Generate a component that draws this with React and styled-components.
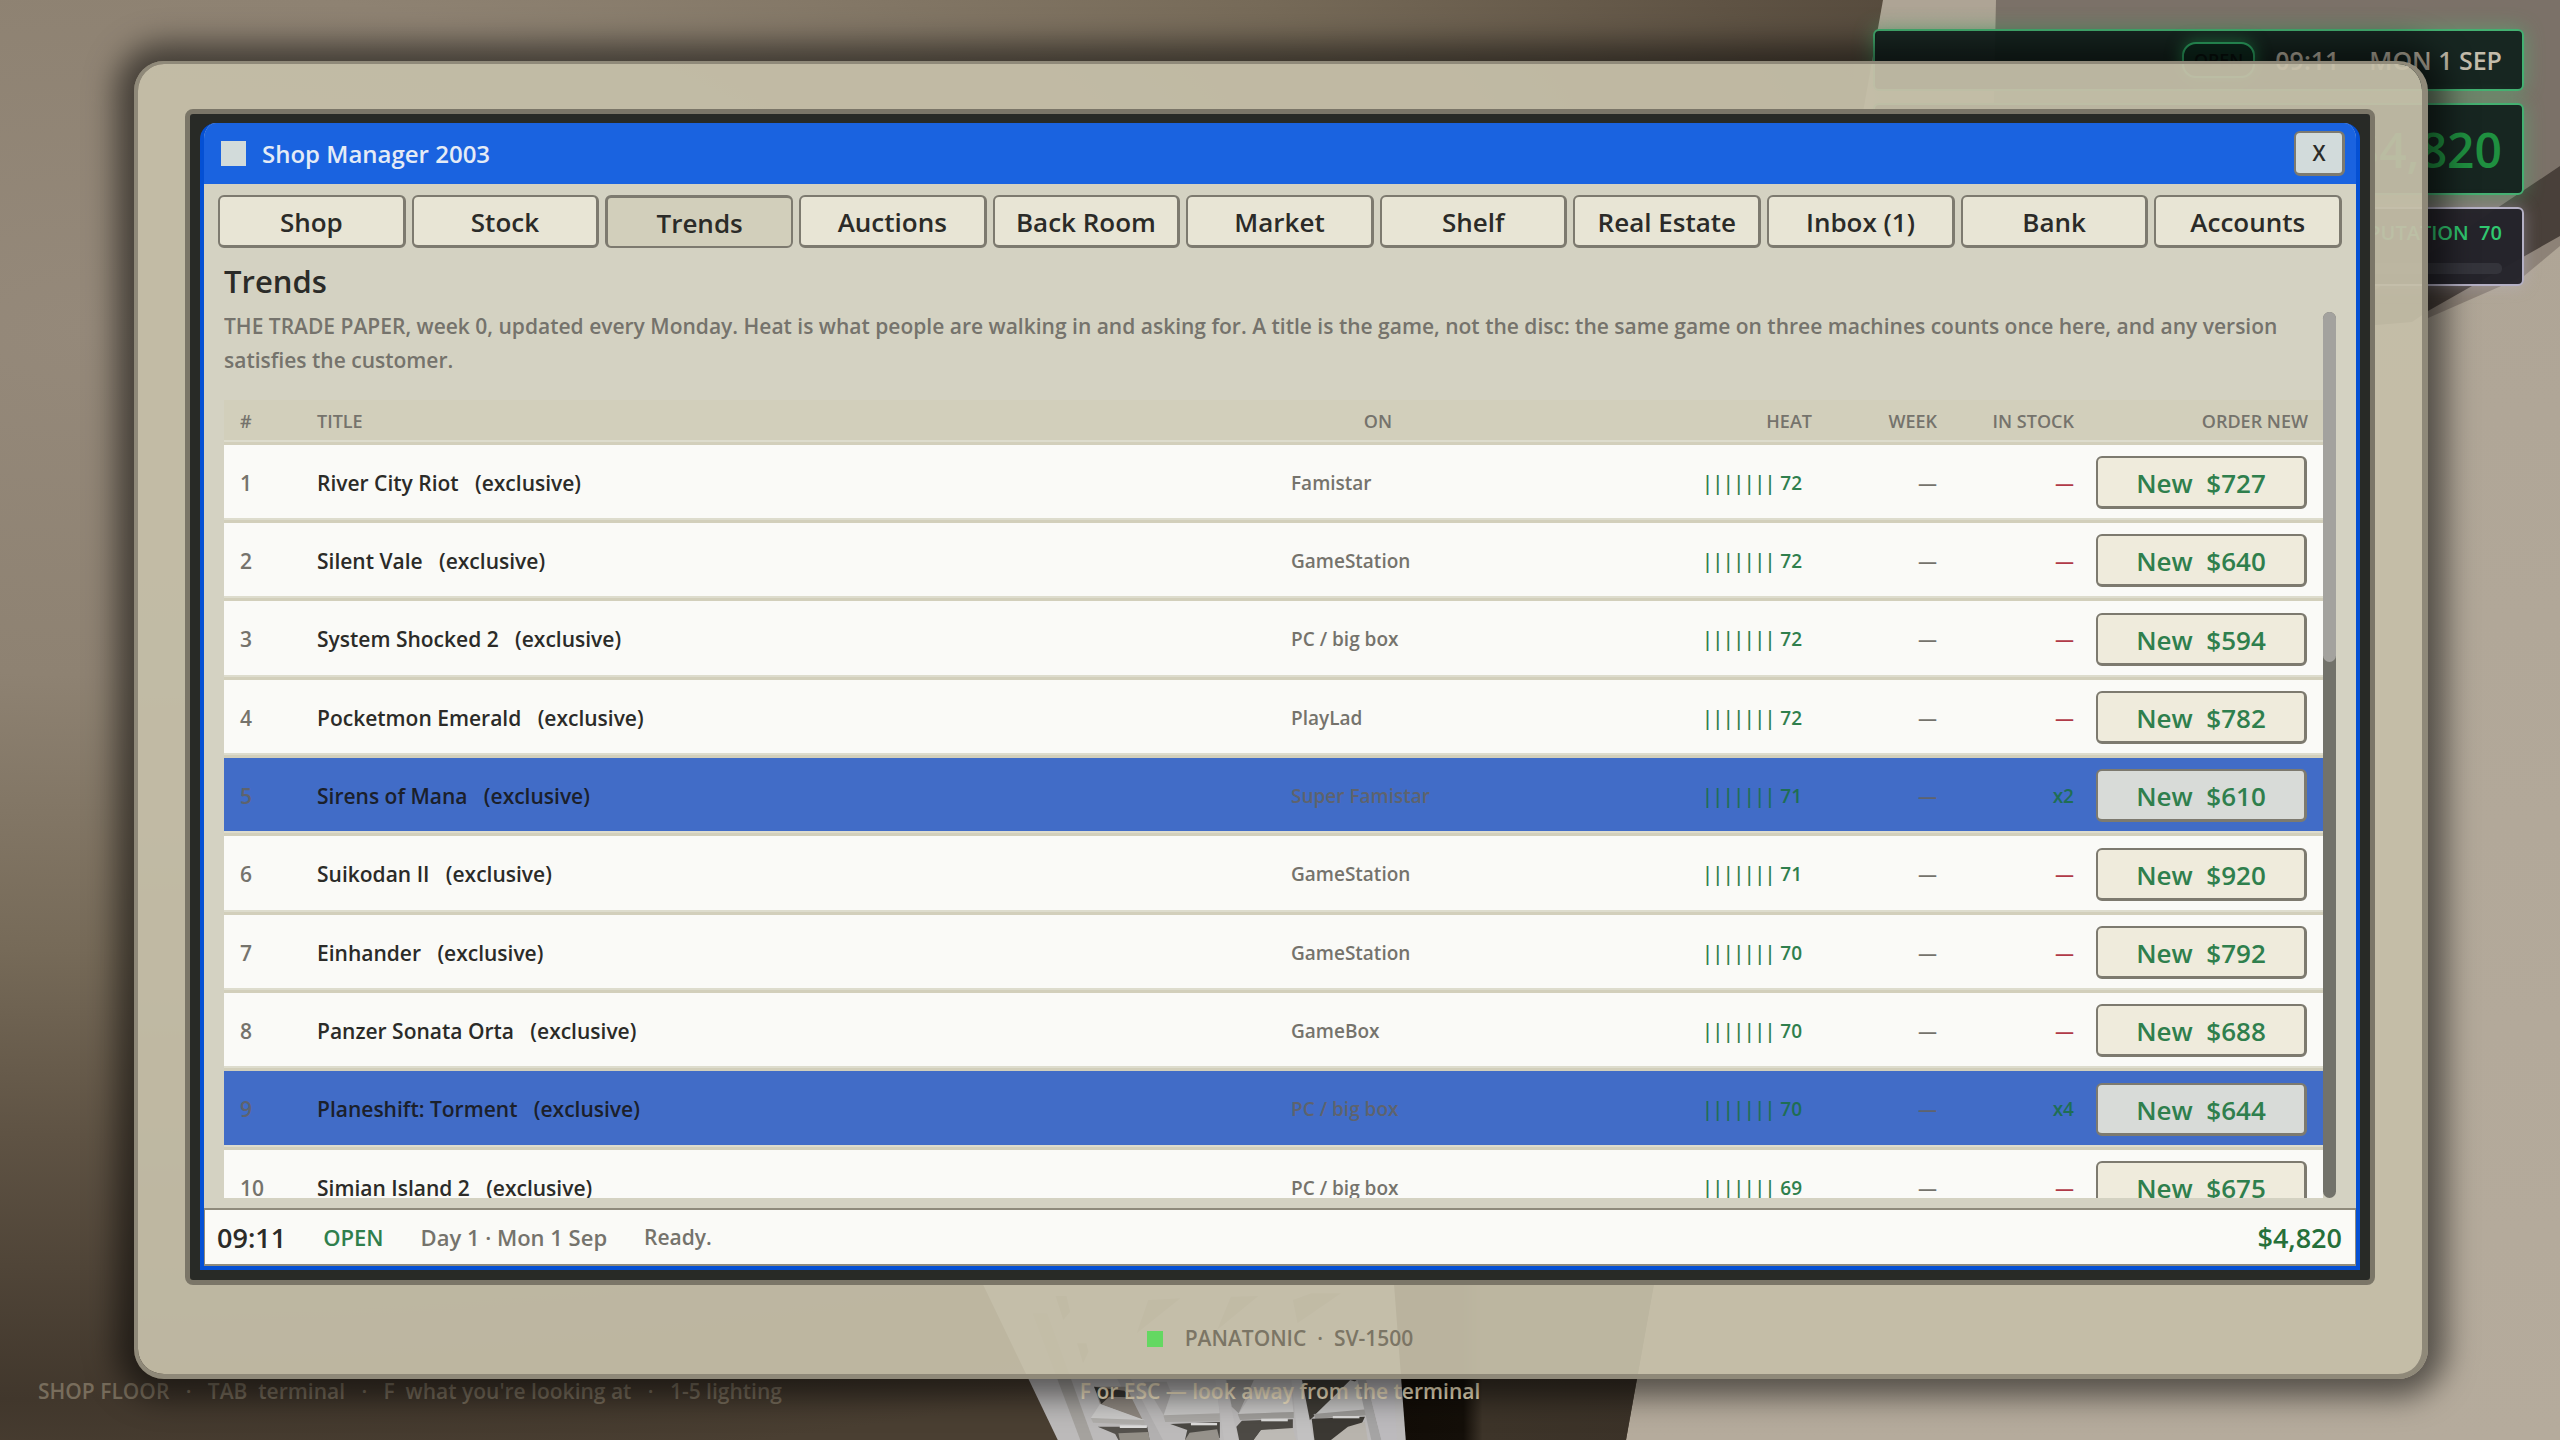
import React, { useState } from "react";
import styled, { createGlobalStyle, css } from "styled-components";

const c = {
  bezel: "rgba(197, 190, 168, 0.94)",
  bezelEdge: "#8f8979",
  frame: "#7b7668",
  glass: "#282a26",
  blue: "#0450d4",
  titleBlue: "#1a63e0",
  panel: "#d4d2c2",
  sand: "#d2cfbb",
  tab: "#e8e5d5",
  edge: "#7d7a6f",
  ink: "#2b2b28",
  muted: "#75736c",
  green: "#2f7f4d",
  paper: "#fafaf7",
};

const Global = createGlobalStyle`
  *, *::before, *::after { box-sizing: border-box; }
  body {
    margin: 0;
    background: #4a3f32;
    color: ${c.ink};
    font-family: "Open Sans", "Noto Sans", sans-serif;
    font-weight: 600;
    overflow: hidden;
  }
  button { font: inherit; color: inherit; cursor: pointer; }
`;

const Stage = styled.main`
  position: relative;
  display: flex;
  height: 100vh;
  padding: 61px 132px 61px 134px;
  overflow: hidden;
`;

const Backdrop = styled.svg`
  position: absolute;
  inset: 0;
  width: 100%;
  height: 100%;
`;

/* heads-up display, lying under the terminal */

const Hud = styled.aside`
  position: absolute;
  top: 29px;
  right: 36px;
  width: 651px;
  display: flex;
  flex-direction: column;
  gap: 12px;
`;

const HudPanel = styled.div`
  display: flex;
  align-items: center;
  justify-content: flex-end;
  gap: 30px;
  height: ${(p) => p.$height}px;
  padding: 0 20px;
  border: 2px solid #44b071;
  border-radius: 6px;
  background: rgba(18, 34, 30, 0.95);
  box-shadow: 0 0 20px rgba(70, 200, 120, 0.45);
  color: #c3bcab;
  font-size: 25px;
  white-space: pre;
`;

const ReputationPanel = styled(HudPanel)`
  flex-direction: column;
  align-items: stretch;
  justify-content: space-between;
  gap: 0;
  padding: 10px 20px;
  border-color: #b4b0c4;
  background: rgba(36, 35, 42, 0.97);
  box-shadow: 0 0 16px rgba(190, 185, 210, 0.4);
  color: #30c870;
  font-size: 20px;
  line-height: 28px;
  text-align: right;
`;

const Meter = styled.div`
  height: 11px;
  border-radius: 5px;
  background: #34343b;
`;

const OpenPill = styled.span`
  display: flex;
  align-items: center;
  height: 36px;
  padding: 0 10px;
  margin-right: -10px;
  border: 2px solid #2fae68;
  border-radius: 14px;
  background: #0e2a1e;
  box-shadow: 0 0 16px rgba(47, 190, 104, 0.6);
  color: #08100d;
  font-size: 18px;
`;

const HudCash = styled.span`
  color: #1f9040;
  font-size: 48px;
`;

const Hints = styled.footer`
  position: absolute;
  inset: auto 0 35px;
  display: grid;
  grid-template-columns: 1fr auto 1fr;
  padding: 0 38px;
  color: #786d5c;
  font-size: 21px;
  line-height: 28px;
  white-space: pre;
`;

const LeaveHint = styled.span`
  color: #fbeccb;
`;

/* monitor */

const Monitor = styled.section`
  position: relative;
  flex: 1;
  display: flex;
  flex-direction: column;
  min-width: 0;
  padding: 45px 47px 0;
  border: solid ${c.bezelEdge};
  border-width: 3px 6px 5px 4px;
  border-radius: 30px;
  background: ${c.bezel};
  background-clip: padding-box;
  box-shadow: 0 0 30px 18px rgba(0, 0, 0, 0.53);
`;

const Tube = styled.div`
  flex: 1;
  display: flex;
  min-height: 0;
  padding: 9px 10px 10px;
  border: 5px solid ${c.frame};
  border-radius: 8px;
  background: ${c.glass};
`;

const Plate = styled.div`
  display: flex;
  align-items: center;
  justify-content: center;
  gap: 22px;
  padding: 39px 0 21px;
  color: #7b7565;
  font-size: 21px;
  line-height: 29px;
  white-space: pre;
`;

const Led = styled.span`
  width: 16px;
  height: 16px;
  background: #64d862;
`;

/* window */

const Window = styled.div`
  flex: 1;
  display: flex;
  flex-direction: column;
  min-width: 0;
  border: solid ${c.blue};
  border-width: 0 4px 4px;
  border-radius: 16px 16px 0 0;
  background: ${c.panel};
  overflow: hidden;
`;

const TitleBar = styled.header`
  display: flex;
  align-items: center;
  gap: 16px;
  height: 61px;
  padding: 0 11px 0 17px;
  background: ${c.titleBlue};
  color: #e4ebf6;
  font-size: 24px;
`;

const AppIcon = styled.span`
  width: 25px;
  height: 25px;
  background: #d2dbda;
`;

const raised = css`
  border: solid ${c.edge};
  border-width: 2px 3px 3px 2px;
  border-radius: 6px;
`;

const CloseButton = styled.button`
  ${raised}
  width: 51px;
  height: 45px;
  margin-left: auto;
  padding: 0;
  background: #d2dbdb;
  color: ${c.ink};
  font-size: 21px;
`;

const Tabs = styled.nav`
  display: flex;
  gap: 6px;
  padding: 11px 14px 0;
`;

const Tab = styled.button`
  ${raised}
  flex: 1 1 0;
  min-width: 0;
  height: 53px;
  padding: 1px 0 0;
  background: ${c.tab};
  font-size: 26px;
  white-space: nowrap;

  &[aria-current="page"] {
    border-width: 3px 2px 2px 3px;
    background: ${c.sand};
  }
`;

const Page = styled.div`
  flex: 1;
  display: flex;
  flex-direction: column;
  min-height: 0;
  padding: 12px 20px 10px;
`;

const Heading = styled.h1`
  margin: 0 0 10px;
  font-size: 31px;
  font-weight: 600;
  line-height: 42px;
`;

const ScrollArea = styled.div`
  flex: 1;
  display: flex;
  min-height: 0;
`;

const ScrollContent = styled.div`
  flex: 1;
  min-width: 0;
  overflow: hidden;
`;

const ScrollTrack = styled.div`
  width: 13px;
  border-radius: 7px;
  background: #72726a;
`;

const ScrollThumb = styled.div`
  height: 39.5%;
  border-radius: 7px;
  background: #a3a29e;
`;

const Intro = styled.p`
  margin: -3px 0 23px;
  padding-right: 20px;
  color: ${c.muted};
  font-size: 21px;
  line-height: 34px;
`;

const Table = styled.table`
  width: 100%;
  table-layout: fixed;
  border-collapse: separate;
  border-spacing: 0;
`;

const Col = styled.col`
  width: ${(p) => (p.$width ? `${p.$width}px` : "auto")};
`;

const cell = css`
  padding: 0 ${(p) => p.$end || 0}px 0 ${(p) => p.$start || 0}px;
  border-bottom: 3px solid ${c.sand};
  box-shadow: inset 0 -2px #dddccd;
  text-align: ${(p) => p.$align || "left"};
  white-space: pre;
`;

const HeadCell = styled.th`
  ${cell}
  height: 45px;
  background: ${c.sand};
  color: ${c.muted};
  font-size: 18px;
  font-weight: 600;
`;

const Cell = styled.td`
  ${cell}
  height: 78px;
  color: ${(p) => (p.$tone ? p.$tone : c.muted)};
  font-size: ${(p) => p.$size || 19}px;
`;

const OrderButton = styled.button`
  ${raised}
  display: block;
  width: 211px;
  height: 53px;
  margin-left: auto;
  padding: 2px 0 0;
  background: #efebdc;
  color: ${c.green};
  font-size: 26px;
  white-space: pre;
`;

const Row = styled.tr`
  ${Cell} {
    background: ${c.paper};
    background-clip: padding-box;
  }
  &:nth-child(3n) ${Cell} {
    height: 79px;
  }
  ${(p) =>
    p.$owned &&
    css`
      ${Cell} {
        background-color: #416cc7;
      }
      ${OrderButton} {
        background: #d8dbd8;
      }
    `}
`;

const StatusBar = styled.div`
  display: flex;
  align-items: center;
  gap: 37px;
  height: 58px;
  padding: 0 13px 0 12px;
  border: solid #8f8b7c;
  border-width: 2px 1px;
  background: ${c.paper};
  color: ${c.muted};
  font-size: 21px;
`;

const StatusText = styled.span`
  font-size: ${(p) => p.$size}px;
  color: ${(p) => p.$color || "inherit"};
`;

const StatusCash = styled(StatusText)`
  margin-left: auto;
`;

const tabs = [
  "Shop", "Stock", "Trends", "Auctions", "Back Room", "Market",
  "Shelf", "Real Estate", "Inbox (1)", "Bank", "Accounts",
];

const titles = [
  { title: "River City Riot", on: "Famistar", heat: 72, price: 727 },
  { title: "Silent Vale", on: "GameStation", heat: 72, price: 640 },
  { title: "System Shocked 2", on: "PC / big box", heat: 72, price: 594 },
  { title: "Pocketmon Emerald", on: "PlayLad", heat: 72, price: 782 },
  { title: "Sirens of Mana", on: "Super Famistar", heat: 71, stock: 2, price: 610 },
  { title: "Suikodan II", on: "GameStation", heat: 71, price: 920 },
  { title: "Einhander", on: "GameStation", heat: 70, price: 792 },
  { title: "Panzer Sonata Orta", on: "GameBox", heat: 70, price: 688 },
  { title: "Planeshift: Torment", on: "PC / big box", heat: 70, stock: 4, price: 644 },
  { title: "Simian Island 2", on: "PC / big box", heat: 69, price: 675 },
];

function Room() {
  return (
    <Backdrop viewBox="0 0 2560 1440" preserveAspectRatio="none" aria-hidden="true">
      <defs>
        <radialGradient
          id="wall" gradientUnits="userSpaceOnUse" cx="0" cy="0" r="1150"
          gradientTransform="translate(100 330) scale(2.2 1)"
        >
          <stop offset="0" stopColor="#95897a" />
          <stop offset="0.3" stopColor="#8e8272" />
          <stop offset="0.54" stopColor="#766a58" />
          <stop offset="0.7" stopColor="#5f5344" />
          <stop offset="0.93" stopColor="#41372c" />
          <stop offset="1" stopColor="#4a3f32" />
        </radialGradient>
        <linearGradient id="plaster" x1="0" y1="0" x2="0" y2="1">
          <stop offset="0" stopColor="#aea495" />
          <stop offset="1" stopColor="#b5ab9c" />
        </linearGradient>
        <linearGradient id="gap" x1="0" y1="0" x2="1" y2="0">
          <stop offset="0" stopColor="#120d07" />
          <stop offset="0.27" stopColor="#140f09" />
          <stop offset="0.34" stopColor="#3d3429" />
          <stop offset="1" stopColor="#3b3228" />
        </linearGradient>
      </defs>
      <rect width="2560" height="1440" fill="url(#wall)" />
      <path d="M1883 0H2560V1440H1626Z" fill="url(#plaster)" />
      <path d="M1996 0H2560V172L2380 292H1990Z" fill="#7b7168" />
      <path d="M2560 232V246L2524 276L2428 318V308Z" fill="#8d8277" />
      <path d="M2560 166V236L2428 311L2412 322L2340 328L2330 320Z" fill="#49403a" />
      <path d="M1390 1240H1662L1626 1440H1404Z" fill="url(#gap)" />
      <g transform="translate(960 1280) scale(0.4591 0.3333)">
        <path d="M35 -30H943L971 480H213Z" fill="#bcbaba" />
        <path d="M158 100L190 100L290 480H262Z" fill="#a5a29e" />
        <path d="M208 48H232L240 95L225 120ZM255 190H275L280 215L268 250ZM410 60L480 55L385 160ZM590 50L650 48L560 150ZM765 40H830L735 130L725 60Z" fill="#88857f" />
        <path d="M340 290L370 290L442 480H412Z" fill="#b2b0b0" />
        <path d="M292 320H362L385 385L398 420L305 372Z" fill="#8f8880" />
        <path d="M292 320L358 332L370 352L325 350L308 372Z" fill="#3a3833" />
        <path d="M305 372L285 414L400 430L402 420Z" fill="#cccbca" />
        <path d="M285 414L402 420V434L290 428Z" fill="#b0aeab" />
        <path d="M300 440L408 440L413 480H345L338 462Z" fill="#55524d" />
        <path d="M345 460L410 456L413 480H348Z" fill="#928e86" />
        <path d="M348 436H407V444H348Z" fill="#dcdbda" />
        <path d="M400 305H450L462 345L445 408L415 340Z" fill="#adabaa" />
        <path d="M462 330H560L566 408H443Z" fill="#c8c7c6" />
        <path d="M443 406L566 400V424L447 426Z" fill="#aaa8a5" />
        <path d="M458 432L566 426V474L545 480H490L495 450Z" fill="#4a4843" />
        <path d="M500 458L560 448L566 480H490Z" fill="#96928b" />
        <path d="M503 429H560V436H503Z" fill="#dcdbda" />
        <path d="M556 300H578L606 480H575Z" fill="#c0bebe" />
        <path d="M580 300L640 300L607 400L592 380Z" fill="#979593" />
        <path d="M640 330H722L726 396L607 402Z" fill="#cac9c8" />
        <path d="M605 402L727 396V414L610 420Z" fill="#9f9d9a" />
        <path d="M614 422L725 418V450L655 452L640 480H608L602 440Z" fill="#4d4a45" />
        <path d="M656 450L725 444L732 480H640Z" fill="#bdbab5" />
        <path d="M656 416H714V424H656Z" fill="#dcdbda" />
        <path d="M722 300H743L770 480H736Z" fill="#c2c1c1" />
        <path d="M745 300H864L800 372L770 410L762 420Z" fill="#3f3c36" />
        <path d="M850 300L876 312L880 392L775 402L815 348Z" fill="#c6c5c4" />
        <path d="M770 402L886 388V406L774 416Z" fill="#9b9996" />
        <path d="M766 416L882 410L872 440L822 480H772Z" fill="#3b3833" />
        <path d="M845 440L882 425L888 480H808Z" fill="#b8b4ad" />
        <path d="M812 408H870V415H812Z" fill="#dcdbda" />
        <path d="M866 300H885L918 480H896Z" fill="#a5a4a4" />
        <path d="M885 300H944L952 480H918Z" fill="#bcbabd" />
      </g>
    </Backdrop>
  );
}

function TrendRow({ rank, item }) {
  const owned = Boolean(item.stock);
  const soft = owned ? "#5e636d" : c.muted;
  const heat = owned ? "#1f6e54" : c.green;
  return (
    <Row $owned={owned}>
      <Cell $start={16} $size={21} $tone={soft}>{rank}</Cell>
      <Cell $size={21} $tone={owned ? "#1b202b" : c.ink}>{`${item.title}   (exclusive)`}</Cell>
      <Cell $tone={soft}>{item.on}</Cell>
      <Cell $align="right" $end={10} $tone={heat}>{`||||||| ${item.heat}`}</Cell>
      <Cell $align="right" $tone={soft}>—</Cell>
      <Cell $align="right" $tone={owned ? heat : "#b03a48"}>{owned ? `x${item.stock}` : "—"}</Cell>
      <Cell $align="right" $end={16}>
        <OrderButton type="button">{`New  $${item.price}`}</OrderButton>
      </Cell>
    </Row>
  );
}

export default function App() {
  const [active, setActive] = useState("Trends");
  return (
    <>
      <Global />
      <Stage>
        <Room />
        <Hud>
          <HudPanel $height={62}>
            <OpenPill>OPEN</OpenPill>
            <span>09:11</span>
            <span>MON 1 SEP</span>
          </HudPanel>
          <HudPanel $height={92}>
            <HudCash>$4,820</HudCash>
          </HudPanel>
          <ReputationPanel $height={79}>
            <span>REPUTATION  70</span>
            <Meter />
          </ReputationPanel>
        </Hud>
        <Hints>
          <span>{"SHOP FLOOR   ·   TAB  terminal   ·   F  what you're looking at   ·   1-5 lighting"}</span>
          <LeaveHint>F or ESC — look away from the terminal</LeaveHint>
        </Hints>
        <Monitor>
          <Tube>
            <Window>
              <TitleBar>
                <AppIcon />
                <span>Shop Manager 2003</span>
                <CloseButton type="button" aria-label="Close">X</CloseButton>
              </TitleBar>
              <Tabs>
                {tabs.map((name) => (
                  <Tab
                    key={name}
                    type="button"
                    aria-current={name === active ? "page" : undefined}
                    onClick={() => setActive(name)}
                  >
                    {name}
                  </Tab>
                ))}
              </Tabs>
              <Page>
                <Heading>Trends</Heading>
                <ScrollArea>
                  <ScrollContent>
                    <Intro>
                      THE TRADE PAPER, week 0, updated every Monday. Heat is what people are walking in and
                      asking for. A title is the game, not the disc: the same game on three machines counts
                      once here, and any version satisfies the customer.
                    </Intro>
                    <Table>
                      <colgroup>
                        <Col $width={93} />
                        <Col />
                        <Col $width={174} />
                        <Col $width={347} />
                        <Col $width={125} />
                        <Col $width={137} />
                        <Col $width={249} />
                      </colgroup>
                      <thead>
                        <tr>
                          <HeadCell $start={16}>#</HeadCell>
                          <HeadCell>TITLE</HeadCell>
                          <HeadCell $align="center">ON</HeadCell>
                          <HeadCell $align="right">HEAT</HeadCell>
                          <HeadCell $align="right">WEEK</HeadCell>
                          <HeadCell $align="right">IN STOCK</HeadCell>
                          <HeadCell $align="right" $end={15}>ORDER NEW</HeadCell>
                        </tr>
                      </thead>
                      <tbody>
                        {titles.map((item, i) => (
                          <TrendRow key={item.title} rank={i + 1} item={item} />
                        ))}
                      </tbody>
                    </Table>
                  </ScrollContent>
                  <ScrollTrack>
                    <ScrollThumb />
                  </ScrollTrack>
                </ScrollArea>
              </Page>
              <StatusBar>
                <StatusText $size={27} $color={c.ink}>09:11</StatusText>
                <StatusText $size={22} $color={c.green}>OPEN</StatusText>
                <StatusText $size={22}>Day 1 · Mon 1 Sep</StatusText>
                <StatusText $size={21}>Ready.</StatusText>
                <StatusCash $size={27} $color="#26703a">$4,820</StatusCash>
              </StatusBar>
            </Window>
          </Tube>
          <Plate>
            <Led />
            <span>PANATONIC  ·  SV-1500</span>
          </Plate>
        </Monitor>
      </Stage>
    </>
  );
}
